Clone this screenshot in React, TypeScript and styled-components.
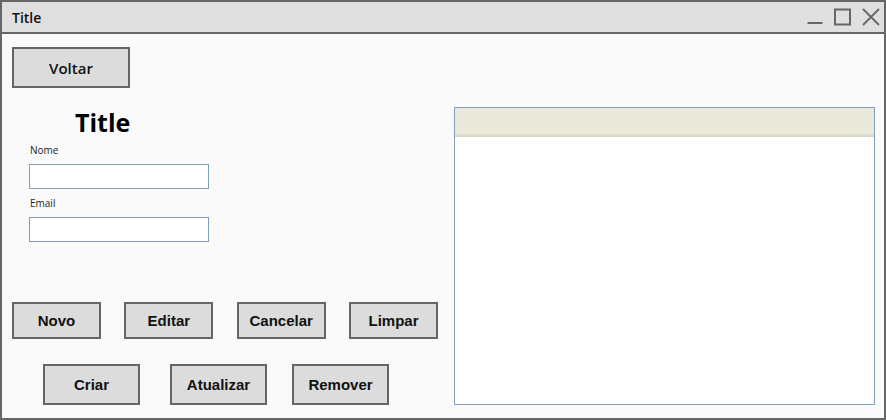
import React from "react";
import styled, { createGlobalStyle } from "styled-components";

const Global = createGlobalStyle`
  html, body { margin: 0; padding: 0; background: #ffffff; }
  * { box-sizing: border-box; }
`;

const Window = styled.div`
  width: 886px;
  height: 420px;
  border: 2px solid #666666;
  display: flex;
  flex-direction: column;
  background: #fafafa;
  overflow: hidden;
`;

const TitleBar = styled.div`
  height: 32px;
  flex: none;
  background: #dfdfdf;
  border-bottom: 2px solid #666666;
  display: flex;
  align-items: center;
  justify-content: space-between;
  padding: 0 4px 0 10px;
`;

const WindowTitle = styled.span`
  font-family: "Open Sans", "Noto Sans", sans-serif;
  font-weight: 600;
  font-size: 14px;
  color: #111111;
`;

const Controls = styled.div`
  display: flex;
  align-items: center;
  gap: 11px;
  height: 18px;
`;

const Body = styled.div`
  flex: 1;
  display: flex;
  padding: 13px 9px 13px 10px;
`;

const LeftColumn = styled.div`
  width: 442px;
  flex: none;
  display: flex;
  flex-direction: column;
  align-items: flex-start;
`;

const BackButton = styled.button`
  width: 118px;
  height: 41px;
  margin: 0;
  padding: 0;
  background: #dcdcdc;
  border: 2px solid #666666;
  font-family: "Open Sans", "Noto Sans", sans-serif;
  font-weight: 600;
  font-size: 15px;
  color: #111111;
`;

const Form = styled.div`
  margin-left: 17px;
  display: flex;
  flex-direction: column;
  align-items: flex-start;
`;

const Heading = styled.h1`
  margin: 19px 0 0 46px;
  font-family: "Open Sans", "Noto Sans", sans-serif;
  font-weight: 700;
  font-size: 25px;
  line-height: 30px;
  color: #000000;
`;

const Field = styled.div<{ $top: number }>`
  margin-top: ${(p) => p.$top}px;
  display: flex;
  flex-direction: column;
  align-items: flex-start;
  gap: 8px;
`;

const Label = styled.label`
  font-family: "Open Sans", "Noto Sans", sans-serif;
  font-size: 10px;
  line-height: 12px;
  color: #222222;
  padding-left: 1px;
`;

const TextInput = styled.input`
  width: 180px;
  height: 25px;
  margin: 0;
  background: #ffffff;
  border: 1px solid #7d9fc2;
  outline: none;
`;

const ActionRow = styled.div<{ $top: number }>`
  margin-top: ${(p) => p.$top}px;
  width: 426px;
  display: flex;
  justify-content: space-between;
`;

const CrudRow = styled.div<{ $top: number }>`
  margin-top: ${(p) => p.$top}px;
  display: flex;
`;

const ActionButton = styled.button<{ $w: number; $h: number; $ml?: number }>`
  width: ${(p) => p.$w}px;
  height: ${(p) => p.$h}px;
  margin: 0 0 0 ${(p) => p.$ml ?? 0}px;
  padding: 0;
  background: #dcdcdc;
  border: 2px solid #666666;
  font-family: "Liberation Sans", Arial, sans-serif;
  font-weight: 700;
  font-size: 15px;
  color: #111111;
`;

const Panel = styled.div`
  flex: 1;
  margin-top: 60px;
  background: #ffffff;
  border: 1px solid #7d9fc2;
  display: flex;
  flex-direction: column;
`;

const PanelHeader = styled.div`
  height: 29px;
  background: linear-gradient(
    to bottom,
    #ebe9dc 0,
    #ebe9dc 26px,
    #e2dfd1 26px,
    #d6d3c4 29px
  );
`;

const MinimizeIcon = () => (
  <svg width="16" height="18" viewBox="0 0 16 18">
    <line x1="0.5" y1="15" x2="15.5" y2="15" stroke="#666" strokeWidth="2" />
  </svg>
);

const MaximizeIcon = () => (
  <svg width="17" height="18" viewBox="0 0 17 18">
    <rect x="1" y="1.5" width="15" height="15" fill="none" stroke="#666" strokeWidth="2" />
  </svg>
);

const CloseIcon = () => (
  <svg width="18" height="18" viewBox="0 0 18 18">
    <path d="M1 1 L17 17 M17 1 L1 17" stroke="#666" strokeWidth="1.8" fill="none" />
  </svg>
);

export default function App() {
  return (
    <>
      <Global />
      <Window>
        <TitleBar>
          <WindowTitle>Title</WindowTitle>
          <Controls>
            <MinimizeIcon />
            <MaximizeIcon />
            <CloseIcon />
          </Controls>
        </TitleBar>
        <Body>
          <LeftColumn>
            <BackButton>Voltar</BackButton>
            <Form>
              <Heading>Title</Heading>
              <Field $top={7}>
                <Label>Nome</Label>
                <TextInput />
              </Field>
              <Field $top={8}>
                <Label>Email</Label>
                <TextInput />
              </Field>
            </Form>
            <ActionRow $top={60}>
              <ActionButton $w={89} $h={37}>Novo</ActionButton>
              <ActionButton $w={89} $h={37}>Editar</ActionButton>
              <ActionButton $w={89} $h={37}>Cancelar</ActionButton>
              <ActionButton $w={89} $h={37}>Limpar</ActionButton>
            </ActionRow>
            <CrudRow $top={25}>
              <ActionButton $w={97} $h={41} $ml={31}>Criar</ActionButton>
              <ActionButton $w={97} $h={41} $ml={30}>Atualizar</ActionButton>
              <ActionButton $w={97} $h={41} $ml={25}>Remover</ActionButton>
            </CrudRow>
          </LeftColumn>
          <Panel>
            <PanelHeader />
          </Panel>
        </Body>
      </Window>
    </>
  );
}
